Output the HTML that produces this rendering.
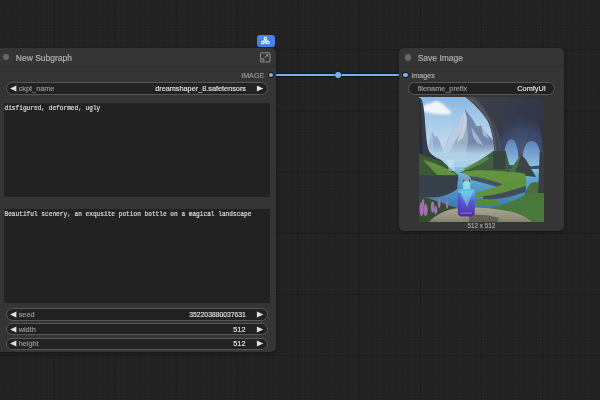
<!DOCTYPE html>
<html><head><meta charset="utf-8">
<style>
html,body{margin:0;padding:0;width:600px;height:400px;overflow:hidden;background:#222;}
body{position:relative;font-family:"Liberation Sans",sans-serif;}
.abs{position:absolute;}
.node{position:absolute;background:#353535;border-radius:5px;box-shadow:0 1px 3px rgba(0,0,0,0.45);}
.sep{position:absolute;height:1px;background:#2e2e2e;}
.dot{position:absolute;border-radius:50%;}
.t{position:absolute;white-space:nowrap;line-height:1;-webkit-text-stroke:0.15px currentColor;}
.combo{position:absolute;background:#222;border:1px solid #575757;border-radius:7px;box-sizing:border-box;}
.ta{position:absolute;background:#222;}
.mono{font-family:"Liberation Mono",monospace;-webkit-text-stroke:0.2px #d8d8d8;transform:scaleY(1.12);transform-origin:left top;}
</style></head>
<body>
<div id="root" style="position:absolute;left:0;top:0;width:600px;height:400px;filter:blur(0.4px);">
<svg class="abs" style="left:0;top:0" width="600" height="400">
  <defs>
    <pattern id="minor" x="4.5" y="0.6" width="6.11" height="6.115" patternUnits="userSpaceOnUse">
      <rect x="0" y="0" width="1" height="6.115" fill="#202020"/>
      <rect x="0" y="0" width="6.11" height="1" fill="#202020"/>
    </pattern>
    <pattern id="major" x="53.4" y="49.45" width="61.1" height="61.15" patternUnits="userSpaceOnUse">
      <rect x="0" y="0" width="1" height="61.15" fill="#1c1c1c"/>
      <rect x="0" y="0" width="61.1" height="1" fill="#1c1c1c"/>
    </pattern>
  </defs>
  <rect width="600" height="400" fill="#232323"/>
  <rect width="600" height="400" fill="url(#minor)"/>
  <rect width="600" height="400" fill="url(#major)"/>
</svg>

<!-- link -->
<svg class="abs" style="left:0;top:0" width="600" height="400">
  <line x1="272" y1="75" x2="404" y2="75" stroke="#151515" stroke-width="4"/>
  <line x1="272" y1="75" x2="404" y2="75" stroke="#76b2f0" stroke-width="2.2"/>
  <circle cx="338.1" cy="75" r="3.4" fill="#181818"/>
  <circle cx="338.1" cy="75" r="3.05" fill="#76b2f0"/>
</svg>

<!-- Node 1 -->
<div class="node" style="left:-6px;top:48px;width:282px;height:303.8px;"></div>
<div class="sep" style="left:0;top:66px;width:276px;"></div>
<div class="dot" style="left:3.2px;top:54.2px;width:6.2px;height:6.2px;background:#686868;"></div>
<div class="t" style="left:15.8px;top:53.8px;font-size:8.5px;color:#b4b4b4;">New Subgraph</div>

<!-- badge -->
<div class="abs" style="left:257px;top:35px;width:18px;height:11.6px;background:#4a80e8;border-radius:3px;"></div>
<svg class="abs" style="left:257px;top:35px" width="18" height="12" viewBox="0 0 18 12">
  <circle cx="8.35" cy="3.4" r="1.25" fill="none" stroke="#fff" stroke-width="1.05"/>
  <path d="M8.35 4.6 V7.6" stroke="#fff" stroke-width="1.1" fill="none"/>
  <circle cx="5.7" cy="7.5" r="1.3" fill="none" stroke="#fff" stroke-width="1.1"/>
  <circle cx="11" cy="7.5" r="1.3" fill="none" stroke="#fff" stroke-width="1.1"/>
  <path d="M5.5 6.2 C6.5 5.6 7.5 5.6 8.35 6.2 C9.2 5.6 10.2 5.6 11.2 6.2" stroke="#fff" stroke-width="1" fill="none"/>
  <circle cx="8.35" cy="7.8" r="0.9" fill="#fff"/>
</svg>
<!-- expand icon -->
<svg class="abs" style="left:259px;top:51px" width="12" height="12" viewBox="0 0 12 12">
  <path d="M1.55 7.0 V3.25 A1.5 1.5 0 0 1 3.05 1.75 H9.45 A1.5 1.5 0 0 1 10.95 3.25 V9.55 A1.5 1.5 0 0 1 9.45 11.05 H5.8" stroke="#8c8c8c" stroke-width="1.1" fill="none"/>
  <rect x="1.55" y="7.85" width="3.3" height="3.2" rx="0.8" stroke="#8c8c8c" stroke-width="1.1" fill="none"/>
  <path d="M5.9 6.6 L8.3 4.2" stroke="#8c8c8c" stroke-width="1.1" fill="none"/>
  <path d="M9.3 3.3 L9.3 6.1 L6.5 3.3 Z" fill="#8c8c8c"/>
</svg>

<div class="t" style="right:335.7px;top:71.5px;font-size:7.2px;color:#9a9a9a;">IMAGE</div>
<div class="dot" style="left:268.6px;top:72.7px;width:4.6px;height:4.6px;background:#72b0f2;box-shadow:0 0 0 0.9px #1a1a1a;"></div>

<!-- ckpt combo -->
<div class="combo" style="left:6px;top:82.3px;width:261.5px;height:12.4px;"></div>
<svg class="abs" style="left:9.8px;top:85px" width="8" height="8"><path d="M0 3.5 L6.4 0.4 V6.6 Z" fill="#e0e0e0"/></svg>
<div class="t" style="left:18.7px;top:84.8px;font-size:7.3px;color:#9c9c9c;">ckpt_name</div>
<div class="t" style="right:354px;top:84.8px;font-size:7.3px;color:#e2e2e2;">dreamshaper_8.safetensors</div>
<svg class="abs" style="left:256px;top:85px" width="8" height="8"><path d="M7.3 3.5 L0.9 0.4 V6.6 Z" fill="#e0e0e0"/></svg>

<!-- textareas -->
<div class="ta" style="left:3.5px;top:103px;width:266.5px;height:94px;"></div>
<div class="t mono" style="left:4.5px;top:105.6px;font-size:6.15px;color:#d8d8d8;">disfigured, deformed, ugly</div>
<div class="ta" style="left:3.5px;top:209px;width:266.5px;height:93.6px;"></div>
<div class="t mono" style="left:4.5px;top:211.6px;font-size:6.15px;color:#d8d8d8;">Beautiful scenery, an exqusite potion bottle on a magical landscape</div>

<!-- seed -->
<div class="combo" style="left:6px;top:308.2px;width:261.5px;height:12.5px;"></div>
<svg class="abs" style="left:9.8px;top:310.7px" width="8" height="8"><path d="M0 3.5 L6.4 0.4 V6.6 Z" fill="#e0e0e0"/></svg>
<div class="t" style="left:18.7px;top:310.6px;font-size:7.3px;color:#9c9c9c;">seed</div>
<div class="t" style="right:354.5px;top:310.6px;font-size:7.3px;color:#e2e2e2;transform:scaleX(0.93);transform-origin:right center;">352203880037631</div>
<svg class="abs" style="left:256px;top:310.7px" width="8" height="8"><path d="M7.3 3.5 L0.9 0.4 V6.6 Z" fill="#e0e0e0"/></svg>

<div class="combo" style="left:6px;top:323.2px;width:261.5px;height:12.3px;"></div>
<svg class="abs" style="left:9.8px;top:325.8px" width="8" height="8"><path d="M0 3.5 L6.4 0.4 V6.6 Z" fill="#e0e0e0"/></svg>
<div class="t" style="left:18.7px;top:325.7px;font-size:7.3px;color:#9c9c9c;">width</div>
<div class="t" style="right:354.5px;top:325.7px;font-size:7.3px;color:#e2e2e2;">512</div>
<svg class="abs" style="left:256px;top:325.8px" width="8" height="8"><path d="M7.3 3.5 L0.9 0.4 V6.6 Z" fill="#e0e0e0"/></svg>

<div class="combo" style="left:6px;top:337.6px;width:261.5px;height:12.3px;"></div>
<svg class="abs" style="left:9.8px;top:340.2px" width="8" height="8"><path d="M0 3.5 L6.4 0.4 V6.6 Z" fill="#e0e0e0"/></svg>
<div class="t" style="left:18.7px;top:340.1px;font-size:7.3px;color:#9c9c9c;">height</div>
<div class="t" style="right:354.5px;top:340.1px;font-size:7.3px;color:#e2e2e2;">512</div>
<svg class="abs" style="left:256px;top:340.2px" width="8" height="8"><path d="M7.3 3.5 L0.9 0.4 V6.6 Z" fill="#e0e0e0"/></svg>

<!-- Node 2 -->
<div class="node" style="left:398.8px;top:48.3px;width:165.4px;height:182.4px;"></div>
<div class="sep" style="left:398.8px;top:66.3px;width:165.4px;"></div>
<div class="dot" style="left:405.3px;top:54.4px;width:6.2px;height:6.2px;background:#686868;"></div>
<div class="t" style="left:417.7px;top:53.8px;font-size:8.5px;color:#b4b4b4;">Save Image</div>
<div class="dot" style="left:403.2px;top:72.7px;width:4.6px;height:4.6px;background:#72b0f2;box-shadow:0 0 0 0.9px #1a1a1a;"></div>
<div class="t" style="left:411.7px;top:71.5px;font-size:7.2px;color:#b0b0b0;">images</div>
<div class="combo" style="left:408.3px;top:82.3px;width:146.9px;height:12.3px;"></div>
<div class="t" style="left:417.7px;top:84.8px;font-size:7.3px;color:#9c9c9c;">filename_prefix</div>
<div class="t" style="right:54.3px;top:84.8px;font-size:7.3px;color:#e2e2e2;">ComfyUI</div>

<!-- image -->
<svg class="abs" style="left:419px;top:96.7px" width="125.3" height="125" viewBox="0 0 125 125">
  <defs>
    <linearGradient id="sky" x1="0" y1="0" x2="0" y2="1">
      <stop offset="0" stop-color="#84b4e0"/>
      <stop offset="0.15" stop-color="#9ec6e8"/>
      <stop offset="0.35" stop-color="#bcd6ec"/>
      <stop offset="0.5" stop-color="#cadeee"/>
      <stop offset="1" stop-color="#cadeee"/>
    </linearGradient>
    <linearGradient id="mtnL" x1="0" y1="0" x2="0" y2="1">
      <stop offset="0" stop-color="#d6e2f0"/>
      <stop offset="0.45" stop-color="#a8bcd4"/>
      <stop offset="1" stop-color="#9ab6d0"/>
    </linearGradient>
    <linearGradient id="mtnR" x1="0" y1="0" x2="0" y2="1">
      <stop offset="0" stop-color="#8a9cb8"/>
      <stop offset="0.5" stop-color="#6a80a2"/>
      <stop offset="1" stop-color="#88a8c6"/>
    </linearGradient>
    <linearGradient id="haze" x1="0" y1="0" x2="0" y2="1">
      <stop offset="0" stop-color="#b4d2e6" stop-opacity="0"/>
      <stop offset="0.4" stop-color="#b4d6ea" stop-opacity="0.9"/>
      <stop offset="1" stop-color="#a0cce4"/>
    </linearGradient>
    <linearGradient id="water" x1="0" y1="0" x2="0" y2="1">
      <stop offset="0" stop-color="#8cc4de"/>
      <stop offset="0.2" stop-color="#62a6d0"/>
      <stop offset="0.6" stop-color="#4282b8"/>
      <stop offset="1" stop-color="#2e6098"/>
    </linearGradient>
    <linearGradient id="cave" x1="0" y1="0" x2="1" y2="0.6">
      <stop offset="0" stop-color="#3e424c"/>
      <stop offset="0.5" stop-color="#343a48"/>
      <stop offset="1" stop-color="#2c3244"/>
    </linearGradient>
    <radialGradient id="vault" cx="103" cy="55" r="40" gradientUnits="userSpaceOnUse">
      <stop offset="0" stop-color="#4c5a7c"/>
      <stop offset="0.55" stop-color="#3c4866"/>
      <stop offset="1" stop-color="#303a52" stop-opacity="0"/>
    </radialGradient>
    <linearGradient id="arch" x1="0" y1="0" x2="0" y2="1">
      <stop offset="0" stop-color="#5c82b8"/>
      <stop offset="0.6" stop-color="#7aa8d4"/>
      <stop offset="1" stop-color="#90bede"/>
    </linearGradient>
    <linearGradient id="bottle" x1="0" y1="0" x2="0" y2="1">
      <stop offset="0" stop-color="#5ccae2"/>
      <stop offset="0.2" stop-color="#5a9ce0"/>
      <stop offset="0.45" stop-color="#5a5ad2"/>
      <stop offset="1" stop-color="#4e2ca8"/>
    </linearGradient>
    <linearGradient id="ground" x1="0" y1="0" x2="0" y2="1">
      <stop offset="0" stop-color="#a8a492"/>
      <stop offset="0.6" stop-color="#94907e"/>
      <stop offset="1" stop-color="#767262"/>
    </linearGradient>
    <filter id="bl" x="-5%" y="-5%" width="110%" height="110%"><feGaussianBlur stdDeviation="0.75"/></filter>
    <filter id="bl2" x="-20%" y="-20%" width="140%" height="140%"><feGaussianBlur stdDeviation="1.1"/></filter>
    <clipPath id="imgclip"><rect width="125" height="125"/></clipPath>
  </defs>
  <g clip-path="url(#imgclip)">
  <g filter="url(#bl)">
  <rect x="-3" y="-3" width="131" height="131" fill="url(#sky)"/>
  <g filter="url(#bl2)">
    <path d="M3 11 C5 7 9 6 12 6.5 C14 3.5 19 3 21 5.5 C25 7 27 10 30 13 C33 15 33 17.5 28 17.5 C20 17.5 12 17 6 15 C4 14 3 12.5 3 11 Z" fill="#f0f5fa"/>
  </g>
  <!-- far left small peaks -->
  <path d="M6 60 L10 44 L13 34.8 L16 40 L18.3 39.2 L22 48 L26 60 Z" fill="#a4bcd6"/>
  <path d="M13 34.8 L16 40 L18.3 39.2 L22 48 L26 60 L15 60 L14 46 Z" fill="#8aa4c2" opacity="0.7"/>
  <!-- main mountain -->
  <path d="M18 62 L23.5 55.8 L30.5 38.3 L36.6 28.7 L38.5 30 L41 20.8 L45.4 12 L52.4 20.8 L57.7 29.6 L62 28.7 L66.4 35.7 L74.3 43.6 L78 62 Z" fill="#98aec8"/>
  <path d="M45.4 12 L41 20.8 L38.5 30 L36.6 28.7 L30.5 38.3 L23.5 55.8 L30 56 L36 44 L41 36 L44 26 Z" fill="#b8cce2"/>
  <path d="M45.4 12 L52.4 20.8 L57.7 29.6 L62 28.7 L66.4 35.7 L74.3 43.6 L77 60 L46 60 L49 44 L48 28 Z" fill="#7288aa"/>
  <path d="M45.4 12 L44 26 L41 36 L38 46 L44 40 L47 30 L48 22 Z" fill="#dce6f2" opacity="0.6"/>
  <path d="M52 30 L58 38 L64 48 L58 46 L54 40 Z" fill="#b6c8de" opacity="0.7"/>
  <path d="M62 28.7 L66.4 35.7 L70 42 L64 38 Z" fill="#c4d4e6" opacity="0.7"/>
  <!-- haze -->
  <rect x="-3" y="46" width="131" height="28" fill="url(#haze)"/>
  <!-- water -->
  <rect x="-3" y="70" width="131" height="58" fill="url(#water)"/>
  <!-- cave -->
  <path d="M45 -3 L46 0 C53 5 63 15 68 23 C72 30 74.5 42 75.4 55 L76 72 L86 72 C85 56 87 42 92 42 C96 42 99 48 100 56 L104 56 C104 50 107 43.5 112 43.5 C118 43.5 122 55 122 68 L121 128 L128 128 L128 -3 Z" fill="url(#cave)"/>
  <path d="M79 72 C77 36 88 12 103 12 C118 12 126 36 124 72 Z" fill="url(#vault)"/>
  <path d="M46 0 C53 5 63 15 68 23 C72 30 74.5 42 75.4 55 L76 72 L84 72 C83 54 81 40 77 30 C71 17 63 8 56 0 Z" fill="#50545c" opacity="0.8"/>
  <path d="M50 0 C58 6 66 15 71 25 C74 33 76 45 77 60" stroke="#6a6e76" stroke-width="1" fill="none" opacity="0.6"/>
  <path d="M56 0 C63 7 70 16 74 27 C77 36 79 48 80 62" stroke="#3a3e46" stroke-width="1.2" fill="none" opacity="0.6"/>
  <!-- arches -->
  <path d="M85.5 67 C84 58 86 42.3 92 42.3 C98 42.3 100 58 99 67 C96 68.5 89 68.5 85.5 67 Z" fill="url(#arch)"/>
  <path d="M103.5 68 C102.5 58 105 44 112.5 44 C120 44 122.5 58 121.8 68 C117 69.5 108 69.5 103.5 68 Z" fill="url(#arch)"/>
  <!-- dark hill -->
  <path d="M89 77 L96 66 L102.3 57.5 L107 63 L111 70 L117 80 Z" fill="#3a4446"/>
  <path d="M89 77 L96 66 L102.3 57.5 L99 68 L95 77 Z" fill="#4e7a3a" opacity="0.8"/>
  <!-- pillar base mound -->
  <path d="M40 76 C52 70 62 62 70 57 L74 54 L86.5 54 C88 60 90 66 92 76 Z" fill="#3e5e3a"/>
  <path d="M44 72 C52 68 60 63 68 59 L70 62 C64 66 56 70 48 73 Z" fill="#5e8c44" opacity="0.85"/>
  <path d="M74 54 L86.5 54 L86 72 L74 72 Z" fill="#323a44" opacity="0.7"/>
  <!-- left cliff -->
  <path d="M-3 1 L1 1 C3 2 4.5 8 5.5 20 C6.5 35 7.5 45 9 52 C11 57 15 60 22 63 L39 79 L39 84 L-3 84 Z" fill="#343c4a"/>
  <path d="M-3 1 L0.5 1 C2 10 3 40 4 60 L-3 62 Z" fill="#262c34" opacity="0.8"/>
  <path d="M-3 55 C6 59 14 62 22 64 L39 78 L39 82 L-3 80 Z" fill="#3a5a34"/>
  <path d="M4 63 C14 65 28 71 38 78 L18 78 C12 72 8 67 4 63 Z" fill="#689a46" opacity="0.85"/>
  <path d="M-3 78 L39 79 L38 92 C30 98 20 102 5 100 L-3 100 Z" fill="#383f4a"/>
  <!-- waterfall -->
  <path d="M28 63 L34 63 L35.5 74 L29.5 74 Z" fill="#dceaf2" opacity="0.45"/>
  <!-- upper land -->
  <path d="M42 75 C52 73 66 73 80 74 C90 75 100 75 106 77 L107 84 C100 84 92 86 84 88 C74 84 62 80 50 79 Z" fill="#62943f"/>
  <path d="M50 79 C62 80 72 83 83 87 L82 91 C72 88 62 85 52 83 Z" fill="#48525a"/>
  <!-- lower diagonal land -->
  <path d="M57 96 C66 93 76 90 84 87.5 C92 85 100 83 107 80 L107 90 C98 92 88 95 78 97.5 C70 99.5 62 100 57 100 Z" fill="#5e923e"/>
  <path d="M64 99 C76 98 90 94 106.6 89 L106.6 95 C92 100 78 103 64 103 Z" fill="#434e58"/>
  <path d="M56 102 C64 101 72 103 80 104 L80 108 C72 109 62 109 56 108 Z" fill="#568a3a"/>
  <!-- right bushes -->
  <path d="M100 122 C102 106 106 92 112 86 C116 84 120 85 122 87 L122 122 Z" fill="#46703a"/>
  <path d="M120.5 55 L125 55 L125 125 L118 125 Z" fill="#3a3e40"/>
  <!-- bottom left grass -->
  <path d="M-3 98 C10 101 22 106 38 111 L38 128 L-3 128 Z" fill="#36502f"/>
  <!-- flowers -->
  <g fill="#a070b4">
    <ellipse cx="2.5" cy="112" rx="2.2" ry="7"/>
    <ellipse cx="6.5" cy="113" rx="2" ry="6"/>
    <ellipse cx="13.5" cy="110" rx="1.8" ry="5.5"/>
    <ellipse cx="20" cy="106" rx="1.3" ry="5"/>
    <ellipse cx="28" cy="107" rx="1.2" ry="4.5"/>
    <ellipse cx="16.5" cy="113" rx="1.6" ry="4"/>
    <ellipse cx="4" cy="106" rx="1.2" ry="4"/>
  </g>
  <!-- ground -->
  <path d="M62 113 C80 110 100 102 110 96 L125 96 L125 128 L112 128 C100 120 80 114 62 113 Z" fill="#4a783a"/>
  <path d="M10 125 C16 118 26 112.5 40 111 C60 109.5 80 112 95 115.5 C104 118 110 122 116 128 L8 128 Z" fill="url(#ground)"/>
  <!-- bottle -->
  <path d="M50 118 C60 117 72 118 80 121 L78 125 L50 125 Z" fill="#45443e" opacity="0.6"/>
  <rect x="43.75" y="81" width="7.5" height="12" rx="1" fill="#70d0e0"/>
  <rect x="44.5" y="84" width="6" height="8" fill="#9ce4ee" opacity="0.6"/>
  <rect x="43.5" y="80" width="8" height="4" rx="1" fill="#8c9ea6"/>
  <rect x="44" y="82.5" width="1.2" height="2.5" fill="#4a4e56"/>
  <rect x="49.8" y="82.5" width="1.2" height="2.5" fill="#4a4e56"/>
  <path d="M38.75 95 C38.75 93 40 92 42 92 L52.5 92 C54.5 92 55.6 93 55.6 95 L55.6 116.5 C55.6 118.5 54 119.5 52 119.5 L42.5 119.5 C40.5 119.5 38.75 118.5 38.75 116.5 Z" fill="url(#bottle)"/>
  <path d="M40.5 94 L54 94 L48 110 Z" fill="#84e2ee" opacity="0.5"/>
  <rect x="38.75" y="96" width="2.5" height="22" fill="#4a38b8" opacity="0.5"/>
  <rect x="41" y="115.5" width="12" height="1.2" fill="#b080e0" opacity="0.6"/>
  </g>
  </g>
</svg>
<div class="t" style="left:467.5px;top:223px;font-size:6.3px;color:#a8a8a8;">512 x 512</div>

</div>
</body></html>
